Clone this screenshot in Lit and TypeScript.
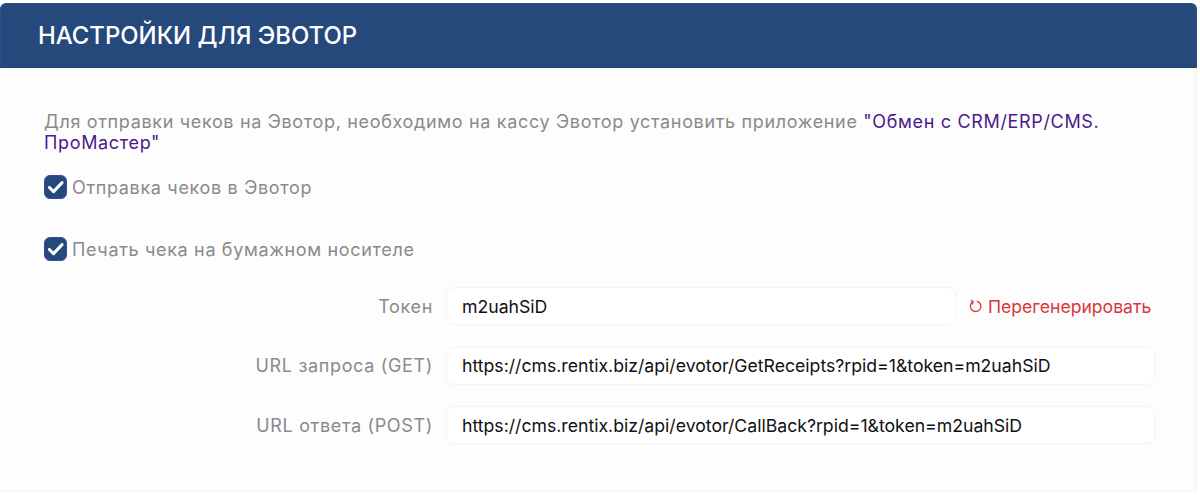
import { LitElement, html, css } from "lit";
import { customElement } from "lit/decorators.js";

const check = html`<svg viewBox="0 0 24 24" width="22" height="22" fill="none" stroke="#fff" stroke-width="3.4" stroke-linecap="round" stroke-linejoin="round"><path d="M5 12.5l4.8 4.8L19.5 7"/></svg>`;

@customElement("app-root")
export class AppRoot extends LitElement {
  static styles = css`
    :host { display: block; width: 1200px; height: 495px; background: #fff; font-family: Inter, "Noto Sans", sans-serif; overflow: hidden; }
    .card { width: 1197px; height: 489px; margin-top: 3px; background: #fdfdfd; border-bottom: 1px solid #f5f5f6; box-sizing: border-box; }
    .head { height: 65px; box-sizing: border-box; background: #26497c; border: 1px solid #2c4f8c; border-bottom-color: #234470; border-radius: 6px 6px 0 0; padding: 0 37px; display: flex; align-items: center; color: #fff; font-size: 23.9px; font-weight: 500; }
    .main { border-right: 2px solid #f7f7f8; height: 423px; box-sizing: border-box; }
    .body { padding: 43px 42px 0 44px; color: #8a8a8a; font-size: 18px; }
    .intro { line-height: 21px; letter-spacing: 0.66px; }
    .intro a { color: #4b1a8c; text-decoration: none; }
    .chk { display: flex; align-items: center; gap: 5px; height: 24px; letter-spacing: 0.66px; }
    .first { margin-top: 22px; }
    .second { margin-top: 38px; }
    .box { width: 23px; height: 24px; box-sizing: border-box; border-radius: 6px; background: #26497c; border: 1px solid #3a4aa8; display: flex; align-items: center; justify-content: center; }
    .rows { margin-top: 26px; display: grid; gap: 21.5px; }
    .row { display: flex; align-items: center; }
    .lbl { width: 389px; text-align: right; letter-spacing: 0.66px; }
    .inp { margin-left: 13px; height: 38px; box-sizing: border-box; background: #fff; border: 1px solid #f4f4f5; border-radius: 8px; padding: 0 15px; display: flex; align-items: center; color: #111; font-size: 17.65px; width: 709px; }
    .short { width: 510px; }
    .regen { margin-left: 13px; color: #d9353a; font-size: 17.6px; display: flex; align-items: center; gap: 5px; }
  `;

  render() {
    return html`<div class="card">
      <div class="head">НАСТРОЙКИ ДЛЯ ЭВОТОР</div>
      <div class="main"><div class="body">
        <div class="intro">Для отправки чеков на Эвотор, необходимо на кассу Эвотор установить приложение <a href="#">"Обмен с CRM/ERP/CMS. ПроМастер"</a></div>
        <div class="chk first"><span class="box">${check}</span>Отправка чеков в Эвотор</div>
        <div class="chk second"><span class="box">${check}</span>Печать чека на бумажном носителе</div>
        <div class="rows">
          <div class="row"><span class="lbl">Токен</span><span class="inp short">m2uahSiD</span>
            <span class="regen"><svg viewBox="0 0 16 16" width="14" height="14" fill="none" stroke="#d9353a" stroke-width="1.5" stroke-linecap="round" stroke-linejoin="round"><path d="M9.5 2.6A6 6 0 1 1 4.4 3.2"/><path d="M2.6 1.6l2 1.6-.6 2.4"/></svg>Перегенерировать</span></div>
          <div class="row"><span class="lbl">URL запроса (GET)</span><span class="inp">https://cms.rentix.biz/api/evotor/GetReceipts?rpid=1&amp;token=m2uahSiD</span></div>
          <div class="row"><span class="lbl">URL ответа (POST)</span><span class="inp">https://cms.rentix.biz/api/evotor/CallBack?rpid=1&amp;token=m2uahSiD</span></div>
        </div>
      </div></div>
    </div>`;
  }
}
